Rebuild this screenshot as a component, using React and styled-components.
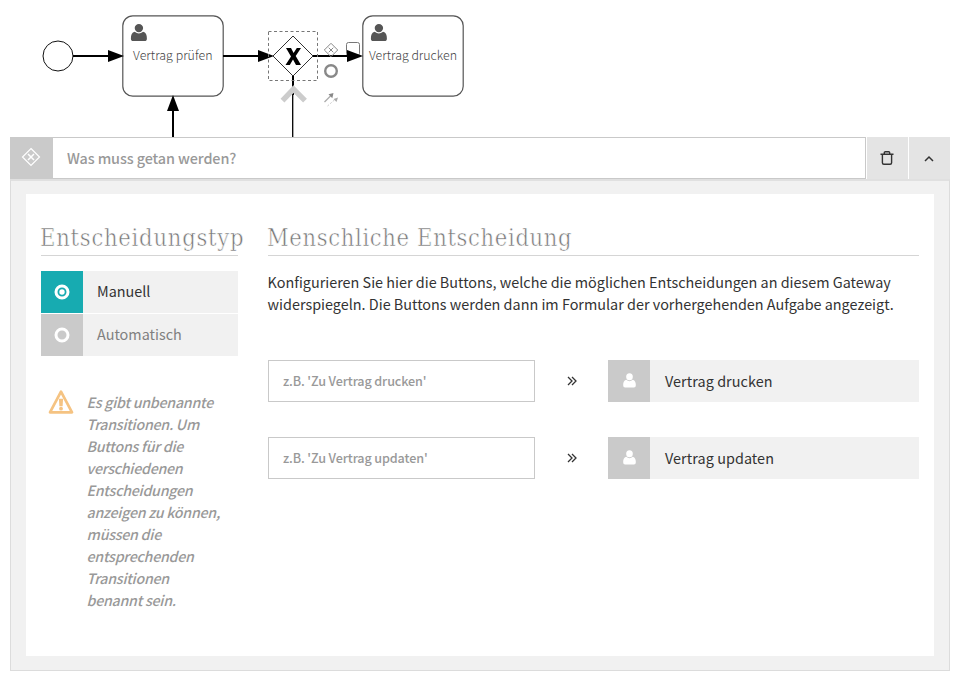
import React from "react";
import styled, { createGlobalStyle, css } from "styled-components";

const sans = `"Noto Sans CJK SC", "Open Sans", sans-serif`;

const GlobalStyle = createGlobalStyle`
  * { box-sizing: border-box; }
  body { margin: 0; background: #fff; color: #333; font-family: ${sans}; }
  button, input { font-family: inherit; border-radius: 0; margin: 0; }
`;

const Page = styled.main`
  width: 960px;
  height: 682px;
  overflow: hidden;
`;

const Canvas = styled.svg`
  display: block;
  width: 960px;
  height: 137px;
`;

const TaskLabel = styled.text`
  font: 300 12.4px ${sans};
  fill: #444;
`;

const Panel = styled.section`
  width: 940px;
  margin-left: 10px;
`;

const Header = styled.header`
  display: flex;
  height: 42px;
`;

const IconCell = styled.span`
  display: flex;
  align-items: center;
  justify-content: center;
  flex: none;
  width: ${(p) => p.$width || 42}px;
  height: 42px;
  padding: ${(p) => p.$padding || "0 1px 1px 0"};
  background: ${(p) => (p.$active ? "#17abb1" : "#cacaca")};
  color: #fff;
`;

const fieldStyle = css`
  height: 42px;
  border: 1px solid #c9c9c9;
  background: #fff;
  outline: none;
  color: #333;
  &::placeholder { color: #999; opacity: 1; font-weight: 500; }
`;

const TitleInput = styled.input`
  ${fieldStyle}
  flex: 1;
  min-width: 0;
  border-left: 0;
  padding: 0 14px 2px;
  font-size: 14.4px;
  letter-spacing: -0.1px;
`;

const HeaderButton = styled.button`
  display: flex;
  align-items: center;
  justify-content: center;
  width: 41px;
  margin-left: 1px;
  padding: 0 2px 0 0;
  border: 0;
  background: #e4e4e4;
  color: #333;
`;

const Frame = styled.div`
  height: 492px;
  padding: 13px 15px 14px;
  border: 1px solid #dcdcdc;
  border-top: 2px solid #e0e0e0;
  background: #f1f1f1;
`;

const Content = styled.div`
  display: grid;
  grid-template-columns: 197px 651px;
  column-gap: 30px;
  height: 462px;
  padding: 28px 15px 0;
  background: #fff;
`;

const Heading = styled.h2`
  height: 34px;
  margin: 0 0 15px;
  border-bottom: 1px solid #d5d5d5;
  font: 400 23.5px/32px "DejaVu Serif", serif;
  font-stretch: condensed;
  letter-spacing: ${(p) => p.$spacing}px;
  text-indent: -1px;
  white-space: nowrap;
  color: #777;
  -webkit-text-stroke: 0.5px #fff;
`;

const Choice = styled.button`
  display: flex;
  width: 100%;
  height: 42px;
  margin-bottom: 1px;
  padding: 0;
  border: 0;
  background: #f1f1f1;
  text-align: left;
`;

const CellLabel = styled.span`
  padding-left: ${(p) => p.$indent || 14}px;
  font-size: 14.4px;
  letter-spacing: ${(p) => p.$spacing || 0}px;
  line-height: ${(p) => p.$line || 42}px;
  color: ${(p) => (p.$muted ? "#808080" : "#333")};
`;

const Notice = styled.aside`
  display: flex;
  margin-top: 35px;
  padding-left: 7px;
`;

const NoticeIcon = styled.span`
  flex: none;
  margin-top: -2px;
`;

const NoticeText = styled.p`
  margin: 0 0 0 12.5px;
  font-size: 14.2px;
  font-style: italic;
  font-weight: 500;
  line-height: 22px;
  letter-spacing: -0.25px;
  white-space: pre-line;
  color: #999;
`;

const Intro = styled.p`
  margin: 0 0 45px -0.5px;
  font-size: 14.4px;
  line-height: 22px;
  white-space: pre-line;
`;

const Transition = styled.div`
  display: grid;
  grid-template-columns: 267px 73px 311px;
  height: 42px;
  margin-bottom: 35px;
`;

const NameInput = styled.input`
  ${fieldStyle}
  padding: 0 14px 2px;
  font-size: 12.6px;
  letter-spacing: -0.12px;
`;

const Arrow = styled.span`
  display: flex;
  align-items: center;
  justify-content: center;
`;

const Target = styled.div`
  display: flex;
  background: #f1f1f1;
`;

const userPath =
  "M4 4.5a4.2 4.2 0 1 1 8.4 0a4.2 4.2 0 0 1-8.4 0M4 8.2Q8.2 11.6 12.4 8.2C15.2 8.8 16.2 11.4 16.2 14.8Q16.2 17.4 13.8 17.4H2.6Q.2 17.4 .2 14.8C.2 11.4 1.2 8.8 4 8.2Z";

function UserIcon() {
  return (
    <svg width="13" height="15" viewBox="0 0 16.4 18" preserveAspectRatio="none">
      <path d={userPath} fill="currentColor" />
    </svg>
  );
}

function RadioIcon({ checked }) {
  return (
    <svg width="16" height="16" viewBox="0 0 16 16">
      <circle cx="8" cy="8" r="6" fill="none" stroke="currentColor" strokeWidth="3" />
      {checked && <circle cx="8" cy="8" r="2.7" fill="currentColor" />}
    </svg>
  );
}

function GatewayIcon() {
  return (
    <svg width="20" height="20" viewBox="0 0 20 20" fill="none" stroke="currentColor">
      <path d="M10 1.5L18.5 10L10 18.5L1.5 10Z" strokeWidth="1.2" />
      <path d="M7 7L13 13M13 7L7 13" strokeWidth="1.5" />
    </svg>
  );
}

function TrashIcon() {
  return (
    <svg width="14" height="16" viewBox="0 0 14 16" fill="none" stroke="currentColor" strokeWidth="1.4">
      <path d="M.5 4.2H13.5M4.3 4V2.7Q4.3 1.7 5.3 1.7H8.7Q9.7 1.7 9.7 2.7V4M2.4 4.2V12.8Q2.4 14.3 3.9 14.3H10.1Q11.6 14.3 11.6 12.8V4.2" />
    </svg>
  );
}

function ChevronIcon() {
  return (
    <svg width="10" height="8" viewBox="0 0 10 8" fill="none" stroke="currentColor" strokeWidth="1.5">
      <path d="M1 7L5 3L9 7" />
    </svg>
  );
}

function DoubleChevron() {
  return (
    <svg width="10" height="10" viewBox="0 0 10 10" fill="none" stroke="#333" strokeWidth="1.3">
      <path d="M1 1L5 5L1 9M5 1L9 5L5 9" />
    </svg>
  );
}

function WarningIcon() {
  return (
    <svg width="26" height="26" viewBox="0 0 26 26">
      <path d="M13 2.6L24 23.3H2Z" fill="none" stroke="#f5c382" strokeWidth="2.7" strokeLinejoin="round" />
      <path d="M10.9 9.8H15.1L14.6 17.2H11.4Z" fill="#f5c382" />
      <circle cx="13" cy="19.7" r="1.9" fill="#f5c382" />
    </svg>
  );
}

function Task({ x, label, labelX, labelWidth }) {
  return (
    <g>
      <rect x={x} y="15.8" width="100.4" height="80.4" rx="10" fill="#fff" stroke="#555" strokeWidth="1.2" />
      <path d={userPath} transform={`translate(${x + 7.9} 23.6)`} fill="#555" />
      <TaskLabel x={labelX} y="60" textLength={labelWidth}>{label}</TaskLabel>
    </g>
  );
}

function Diagram() {
  return (
    <Canvas viewBox="0 0 960 137">
      <circle cx="58" cy="56" r="15" fill="#fff" stroke="#111" />
      <Task x={122.8} label="Vertrag prüfen" labelX={133} labelWidth={79.5} />
      <rect x="346.5" y="42.5" width="13" height="13" rx="2" fill="#fff" stroke="#777" />
      <Task x={362.8} label="Vertrag drucken" labelX={369} labelWidth={88} />
      <path d="M73 56H110M223 56H260M313 56H350M173 137V110M293 95V76" stroke="#000" strokeWidth="2" />
      <path d="M292.7 137V95" stroke="#000" strokeWidth="1.3" />
      <path d="M108 50L124 56L108 62ZM258 50L274 56L258 62ZM347 50L363 56L347 62ZM167 111L173 95L179 111Z" />
      <path d="M293 36L313 56L293 76L273 56Z" fill="#fff" stroke="#333" />
      <path d="M286 48H291L293.6 53L296.8 48H301L295.7 56L301 65H296L293 59.5L289.8 65H285.5L291 56.5Z" fill="#000" />
      <rect x="268.5" y="31.5" width="49" height="49" fill="none" stroke="#777" strokeDasharray="3 2.5" />
      <path d="M282.5 100.6L293.5 89.2L305 100.6" fill="none" stroke="#ccc" strokeWidth="5.4" />
      <g fill="none" stroke="#888">
        <path d="M331 43.3L337.7 50L331 56.7L324.3 50Z" />
        <path d="M328.7 47.7L333.3 52.3M333.3 47.7L328.7 52.3" />
        <circle cx="331" cy="71" r="5.8" strokeWidth="2.4" />
        <path d="M324.5 102L331 95.5" stroke="#aaa" strokeWidth="1.2" />
        <path d="M327.5 106L335 99.5" stroke="#ccc" strokeDasharray="2 1.5" />
      </g>
      <path d="M333.5 93L332.3 98.2L328.5 94.3Z" fill="#888" />
      <path d="M338 97.5L336.5 102L333.5 99Z" fill="#aaa" />
    </Canvas>
  );
}

const transitions = ["Vertrag drucken", "Vertrag updaten"];

export default function App() {
  return (
    <Page>
      <GlobalStyle />
      <Diagram />
      <Panel>
        <Header>
          <IconCell $width={43} $padding="0 2px 2px 0"><GatewayIcon /></IconCell>
          <TitleInput placeholder="Was muss getan werden?" />
          <HeaderButton aria-label="Löschen"><TrashIcon /></HeaderButton>
          <HeaderButton aria-label="Einklappen"><ChevronIcon /></HeaderButton>
        </Header>
        <Frame>
          <Content>
            <div>
              <Heading $spacing={0.75}>Entscheidungstyp</Heading>
              <Choice>
                <IconCell $active><RadioIcon checked /></IconCell>
                <CellLabel $line={40}>Manuell</CellLabel>
              </Choice>
              <Choice>
                <IconCell><RadioIcon /></IconCell>
                <CellLabel $muted $line={40}>Automatisch</CellLabel>
              </Choice>
              <Notice>
                <NoticeIcon><WarningIcon /></NoticeIcon>
                <NoticeText>
                  {"Es gibt unbenannte\nTransitionen. Um\nButtons für die\nverschiedenen\nEntscheidungen\nanzeigen zu können,\nmüssen die\nentsprechenden\nTransitionen\nbenannt sein."}
                </NoticeText>
              </Notice>
            </div>
            <div>
              <Heading $spacing={0.65}>Menschliche Entscheidung</Heading>
              <Intro>
                {"Konfigurieren Sie hier die Buttons, welche die möglichen Entscheidungen an diesem Gateway\nwiderspiegeln. Die Buttons werden dann im Formular der vorhergehenden Aufgabe angezeigt."}
              </Intro>
              {transitions.map((name) => (
                <Transition key={name}>
                  <NameInput placeholder={`z.B. 'Zu ${name}'`} />
                  <Arrow><DoubleChevron /></Arrow>
                  <Target>
                    <IconCell $padding="0 0 1px"><UserIcon /></IconCell>
                    <CellLabel $indent={15} $spacing={0.06}>{name}</CellLabel>
                  </Target>
                </Transition>
              ))}
            </div>
          </Content>
        </Frame>
      </Panel>
    </Page>
  );
}
